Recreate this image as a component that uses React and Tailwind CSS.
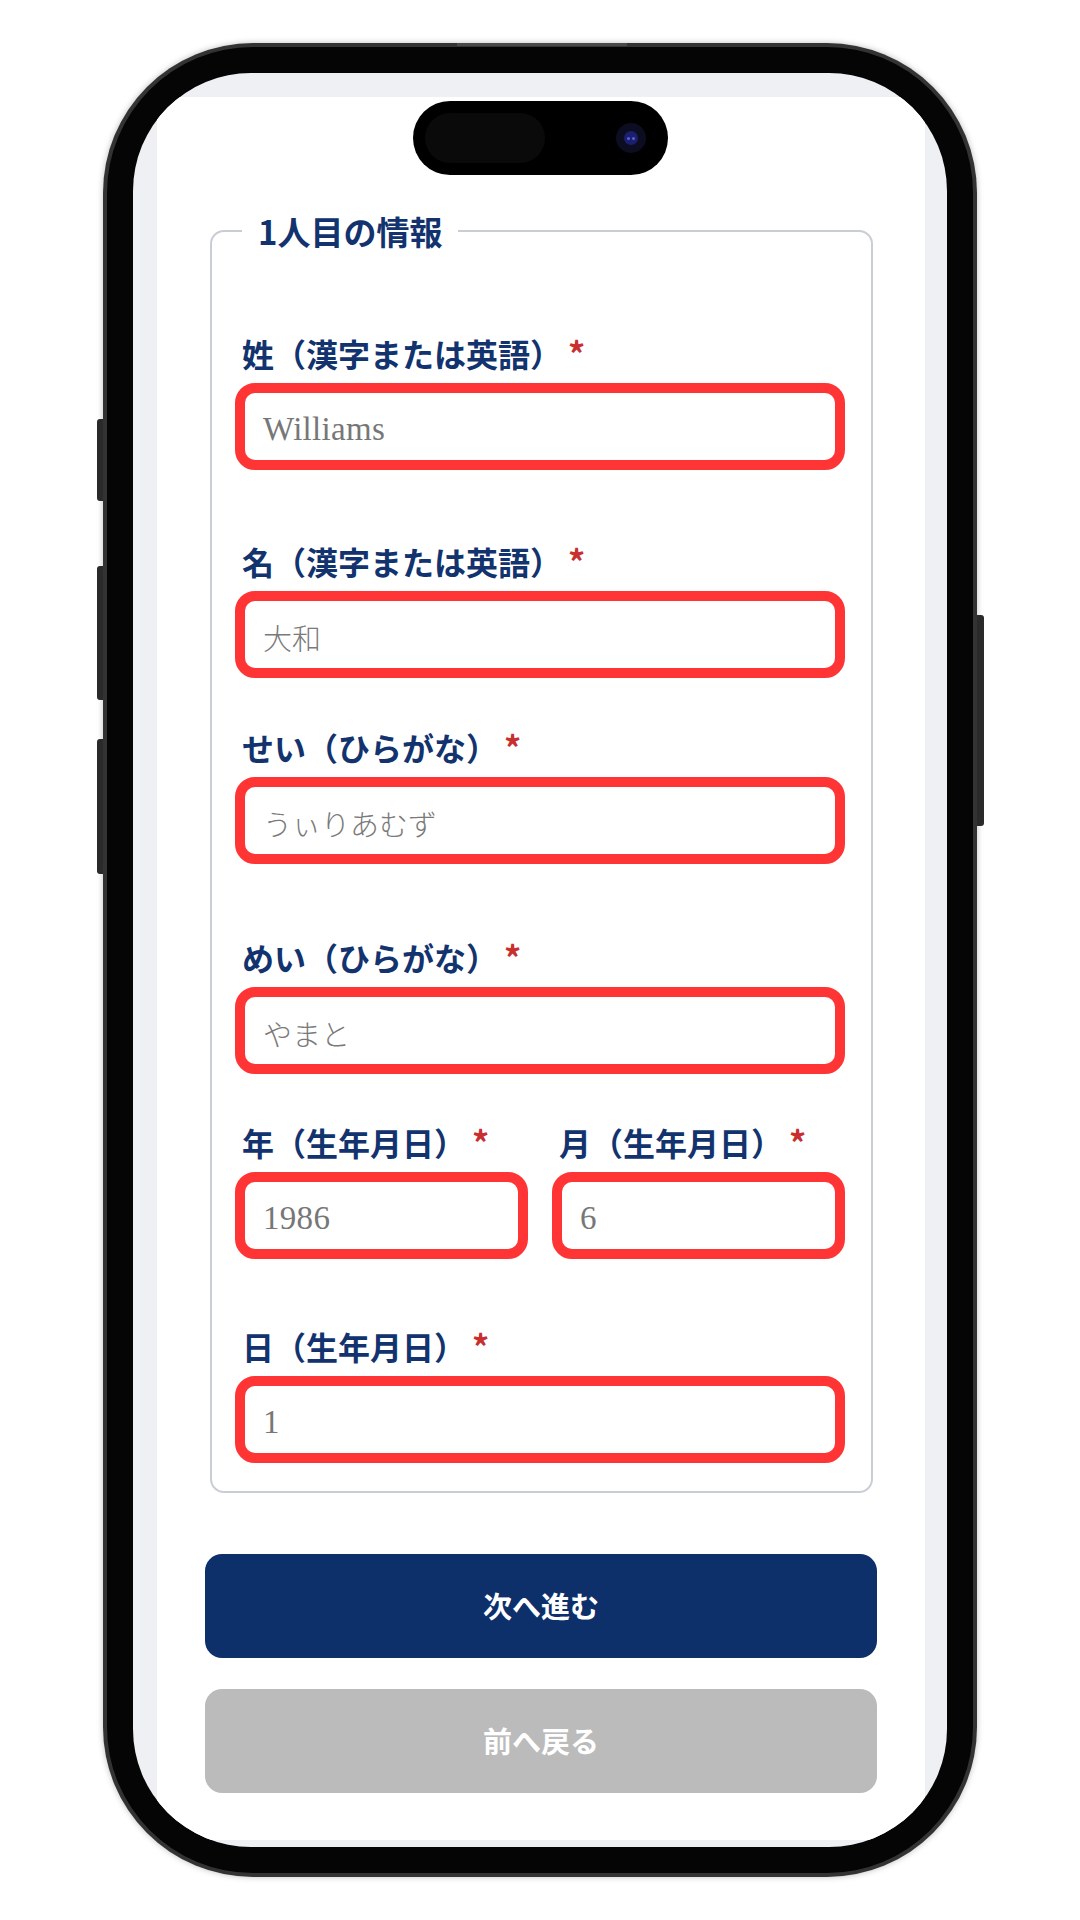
import React from "react";

const LABEL = "font-['Noto_Sans_CJK_JP',sans-serif]";

function Field({ label, value, jp, className = "" }) {
  return (
    <div className={className}>
      <div className={`flex items-start pl-[7px] text-[32px] leading-[32px] font-bold text-[#12336e] ${LABEL}`}>
        <span>{label}</span>
        <span className="ml-[6px] text-[34px] leading-[32px] text-[#c92f2f]">*</span>
      </div>
      <div className="mt-[14px] h-[87px] rounded-[20px] border-[10px] border-[#ff3535] bg-white flex items-center pl-[18px] pt-[5px]">
        {jp ? (
          <span className="text-[29px] leading-none text-[#7a7a7a] font-['Noto_Sans_CJK_JP',sans-serif] font-light">
            {value}
          </span>
        ) : (
          <span className="text-[33px] leading-none tracking-[0.3px] text-[#777777] font-['Liberation_Serif','Noto_Sans_CJK_JP',serif]">
            {value}
          </span>
        )}
      </div>
    </div>
  );
}

export default function App() {
  return (
    <div className="w-[1080px] h-[1920px] bg-white pt-[43px] pl-[103px] overflow-hidden">
      <div className="relative w-[874px] h-[1834px] rounded-[150px] bg-[#333333] p-[4px] shadow-[0_0_6px_rgba(0,0,0,0.25)]">
        {/* side buttons */}
        <div className="absolute left-[-6px] top-[376px] w-[6px] h-[82px] rounded-l-[3px] bg-[#2a2a2a]" />
        <div className="absolute left-[-6px] top-[523px] w-[6px] h-[134px] rounded-l-[3px] bg-[#2a2a2a]" />
        <div className="absolute left-[-6px] top-[696px] w-[6px] h-[135px] rounded-l-[3px] bg-[#2a2a2a]" />
        <div className="absolute right-[-7px] top-[572px] w-[7px] h-[211px] rounded-r-[3px] bg-[#2a2a2a]" />
        <div className="absolute left-[354px] top-[0px] w-[170px] h-[3px] bg-[#4a4a4a]" />

        <div className="w-full h-full rounded-[146px] bg-[#050505] p-[26px]">
          <div className="relative w-full h-full rounded-[118px] overflow-hidden bg-[#eef0f3] pt-[24px] pl-[24px] pr-[22px] pb-[7px]">
            {/* dynamic island */}
            <div className="absolute left-[280px] top-[28px] w-[255px] h-[74px] rounded-full bg-black flex items-center justify-between pl-[12px] pr-[22px]">
              <div className="w-[120px] h-[50px] rounded-full bg-[#0a0a0a]" />
              <div className="w-[30px] h-[30px] rounded-full bg-[#0d0d22] flex items-center justify-center">
                <div className="w-[14px] h-[14px] rounded-full bg-[#1b1f6e] flex items-center justify-center gap-[2px]">
                  <div className="w-[3px] h-[3px] rounded-full bg-[#5561d6]" />
                  <div className="w-[3px] h-[3px] rounded-full bg-[#5561d6]" />
                </div>
              </div>
            </div>

            {/* white panel */}
            <div className="w-full h-full bg-white pt-[133px]">
              <div className="ml-[53px] w-[663px] rounded-[14px] border-2 border-[#c9cdd6] pl-[23px] pr-[26px] pb-[28px]">
                <div
                  className={`-mt-[21px] ml-[7px] w-fit bg-white px-[16px] text-[33px] leading-[40px] font-bold text-[#12336e] ${LABEL}`}
                >
                  1人目の情報
                </div>
                <Field className="mt-[86px]" label="姓（漢字または英語）" value="Williams" />
                <Field className="mt-[75px]" label="名（漢字または英語）" value="大和" jp />
                <Field className="mt-[53px]" label="せい（ひらがな）" value="うぃりあむず" jp />
                <Field className="mt-[77px]" label="めい（ひらがな）" value="やまと" jp />
                <div className="mt-[52px] grid grid-cols-2 gap-[24px]">
                  <Field label="年（生年月日）" value="1986" />
                  <Field label="月（生年月日）" value="6" />
                </div>
                <Field className="mt-[71px]" label="日（生年月日）" value="1" />
              </div>

              <div className="ml-[48px] w-[672px] mt-[61px] flex flex-col gap-[31px]">
                <button
                  className={`h-[104px] rounded-[17px] bg-[#0d2f6a] text-white text-[29px] font-bold ${LABEL}`}
                >
                  次へ進む
                </button>
                <button
                  className={`h-[104px] rounded-[17px] bg-[#bbbbbb] text-white text-[29px] font-bold ${LABEL}`}
                >
                  前へ戻る
                </button>
              </div>
            </div>
          </div>
        </div>
      </div>
    </div>
  );
}
